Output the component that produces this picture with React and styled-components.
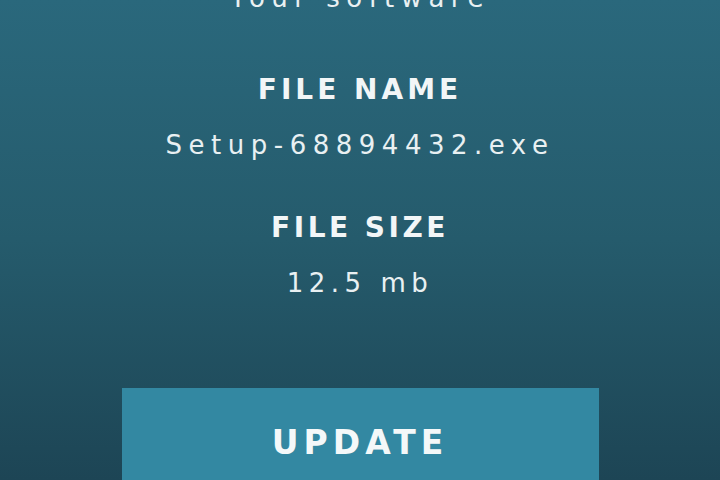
import React from 'react'
import styled, { createGlobalStyle } from 'styled-components'

const GlobalStyle = createGlobalStyle`
  html, body {
    margin: 0;
    padding: 0;
  }
  body {
    font-family: "DejaVu Sans", "Liberation Sans", sans-serif;
  }
`

const Page = styled.div`
  width: 720px;
  height: 480px;
  overflow: hidden;
  display: flex;
  flex-direction: column;
  align-items: center;
  background: linear-gradient(180deg, #2a687c 0%, #255b6c 50%, #1d4555 100%);
  color: #f2f6f7;
`

const Intro = styled.p`
  margin: -15px 0 0;
  font-size: 26px;
  line-height: 1;
  letter-spacing: 6.5px;
  color: #e9f0f2;
`

const Field = styled.div`
  display: flex;
  flex-direction: column;
  align-items: center;
  gap: 28px;
  margin-top: ${p => p.$top}px;
`

const Label = styled.h3`
  margin: 0;
  font-size: 28px;
  line-height: 1;
  font-weight: 700;
  letter-spacing: ${p => p.$spacing || 4}px;
`

const Value = styled.p`
  margin: 0;
  font-size: 26px;
  line-height: 1;
  letter-spacing: ${p => p.$spacing || 6.5}px;
  color: #e9f0f2;
`

const UpdateButton = styled.button`
  flex-shrink: 0;
  width: 477px;
  height: 120px;
  margin-top: 92px;
  padding: 38px 0 0;
  border: none;
  display: flex;
  justify-content: center;
  align-items: flex-start;
  background: #3388a2;
  color: #f4f8f9;
  font-family: inherit;
  font-size: 33px;
  line-height: 1;
  font-weight: 700;
  letter-spacing: 5px;
`

export default function App() {
  return (
    <>
      <GlobalStyle />
      <Page>
        <Intro>Your software</Intro>
        <Field $top={65}>
          <Label>FILE NAME</Label>
          <Value>Setup-68894432.exe</Value>
        </Field>
        <Field $top={56}>
          <Label $spacing={3.5}>FILE SIZE</Label>
          <Value $spacing={5.5}>12.5 mb</Value>
        </Field>
        <UpdateButton>UPDATE</UpdateButton>
      </Page>
    </>
  )
}
